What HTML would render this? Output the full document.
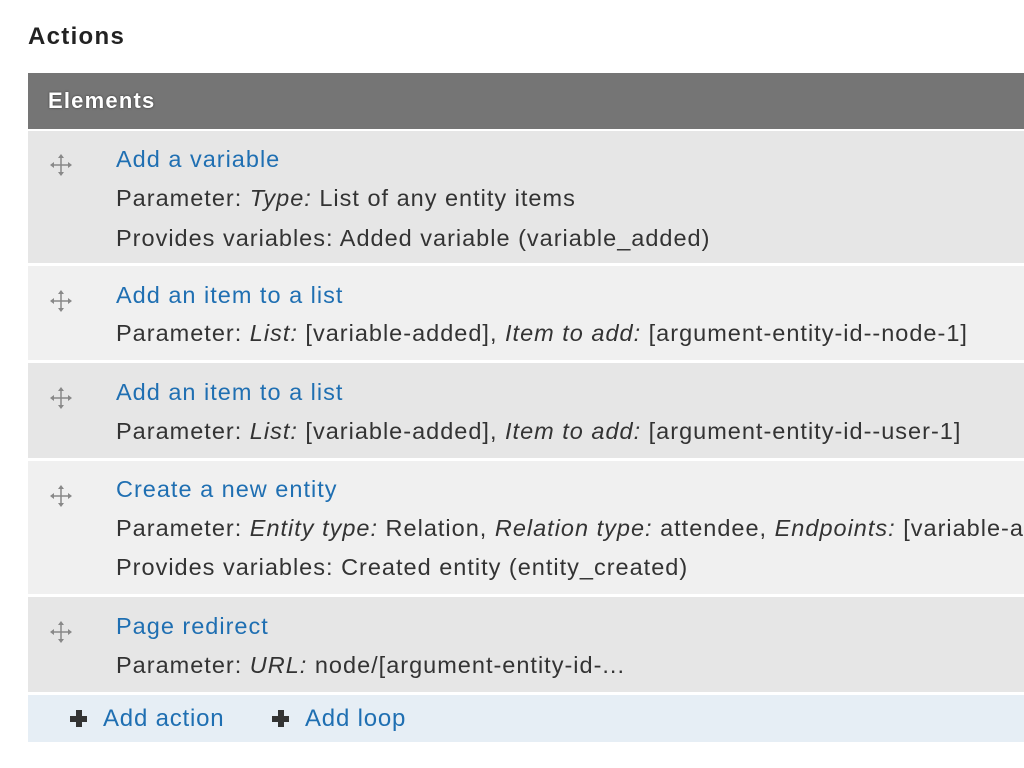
<!DOCTYPE html>
<html><head><style>
body{margin:0;width:1024px;height:768px;background:#fff;font-family:"Liberation Sans",sans-serif;overflow:hidden;position:relative;color:#333}
h2{position:absolute;left:28px;top:23px;margin:0;font-size:24px;font-weight:bold;color:#222;letter-spacing:1.3px}
.t{position:absolute;left:28px;right:0}
.hd{top:73px;height:56px;background:#757575;color:#fff;font-weight:bold;font-size:22px;line-height:56px;padding-left:20px;text-shadow:0 0 2px #333;box-sizing:border-box;letter-spacing:1.2px}
.r{box-sizing:border-box;padding-left:88px;font-size:23.5px;white-space:nowrap;overflow:hidden;letter-spacing:1px}
.a{background:#e6e6e6}.b{background:#f0f0f0}
.r div{position:absolute;left:88px;height:40px;line-height:40px}
.r a{color:#1f6fb2;text-decoration:none}
.ic{position:absolute;left:22px;width:22px;height:22px}
.ft{top:695px;height:47px;background:#e6eef5;font-size:24px;line-height:47px;color:#1f6fb2;letter-spacing:0.8px}
.ft span{position:absolute}
.pl{display:inline-block;position:relative;width:17px;height:17px;vertical-align:-1px;margin-right:16px}
.pl:before{content:"";position:absolute;left:6px;top:0;width:6px;height:17px;background:#333}
.pl:after{content:"";position:absolute;top:6px;left:0;width:17px;height:6px;background:#333}
</style></head><body>
<h2>Actions</h2>
<div class="t hd">Elements</div>
<svg width="0" height="0" style="position:absolute"><defs><g id="m"><path d="M11 2v18M2 11h18" stroke="#888" stroke-width="1.5"/><path d="M11 0l-3 4h6zM11 22l-3-4h6zM0 11l4-3v6zM22 11l-4-3v6z" fill="#888"/></g></defs></svg>

<div class="t r a" style="top:131px;height:132px">
<svg class="ic" style="top:23px"><use href="#m"/></svg>
<div style="top:8px"><a>Add a variable</a></div>
<div style="top:47px">Parameter: <i>Type:</i> List of any entity items</div>
<div style="top:87px">Provides variables: Added variable (variable_added)</div>
</div>
<div class="t r b" style="top:266px;height:94px">
<svg class="ic" style="top:24px"><use href="#m"/></svg>
<div style="top:9px"><a>Add an item to a list</a></div>
<div style="top:47px">Parameter: <i>List:</i> [variable-added], <i>Item to add:</i> [argument-entity-id--node-1]</div>
</div>
<div class="t r a" style="top:363px;height:95px">
<svg class="ic" style="top:24px"><use href="#m"/></svg>
<div style="top:9px"><a>Add an item to a list</a></div>
<div style="top:48px">Parameter: <i>List:</i> [variable-added], <i>Item to add:</i> [argument-entity-id--user-1]</div>
</div>
<div class="t r b" style="top:461px;height:133px">
<svg class="ic" style="top:24px"><use href="#m"/></svg>
<div style="top:8px"><a>Create a new entity</a></div>
<div style="top:47px">Parameter: <i>Entity type:</i> Relation, <i>Relation type:</i> attendee, <i>Endpoints:</i> [variable-added]</div>
<div style="top:86px">Provides variables: Created entity (entity_created)</div>
</div>
<div class="t r a" style="top:597px;height:95px">
<svg class="ic" style="top:24px"><use href="#m"/></svg>
<div style="top:9px"><a>Page redirect</a></div>
<div style="top:48px">Parameter: <i>URL:</i> node/[argument-entity-id-...</div>
</div>
<div class="t ft">
<span style="left:42px"><i class="pl"></i>Add action</span>
<span style="left:244px"><i class="pl"></i>Add loop</span>
</div>
</body></html>
